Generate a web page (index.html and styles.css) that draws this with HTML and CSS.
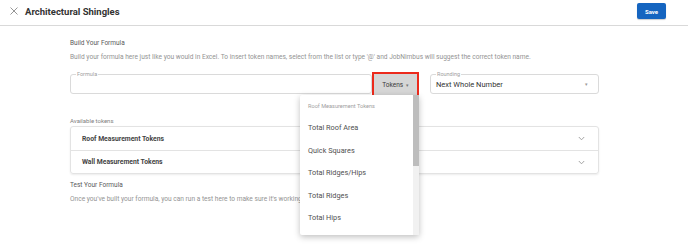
FILE: index.html
```html
<!DOCTYPE html>
<html lang="en">
<head>
<meta charset="UTF-8">
<meta name="viewport" content="width=device-width, initial-scale=1.0">
<title>Architectural Shingles</title>
<link rel="stylesheet" href="styles.css">
</head>
<body>

<div class="topbar">
    <div class="title-wrap">
        <svg class="close-icon" width="8" height="8" viewBox="0 0 8 8"><path d="M0.5 0.5L7.5 7.5M7.5 0.5L0.5 7.5" stroke="#8a8a8a" stroke-width="0.9" fill="none"/></svg>
        <h1>Architectural Shingles</h1>
    </div>
    <button class="save-btn">Save</button>
</div>

<div class="content">
    <h2 class="section-title">Build Your Formula</h2>
    <p class="hint">Build your formula here just like you would in Excel. To insert token names, select from the list or type '@' and JobNimbus will suggest the correct token name.</p>

    <div class="formula-row">
        <div class="formula-group">
            <fieldset class="outlined formula-field">
                <legend>Formula</legend>
            </fieldset>
            <button class="tokens-btn">Tokens <span class="caret">&#9662;</span></button>

            <!-- open tokens menu -->
            <div class="token-menu">
                <div class="menu-list">
                    <div class="menu-header">Roof Measurement Tokens</div>
                    <div class="menu-item">Total Roof Area</div>
                    <div class="menu-item">Quick Squares</div>
                    <div class="menu-item">Total Ridges/Hips</div>
                    <div class="menu-item">Total Ridges</div>
                    <div class="menu-item">Total Hips</div>
                </div>
                <div class="menu-scroll"><div class="menu-thumb"></div></div>
            </div>
        </div>
        <fieldset class="outlined rounding-field">
            <legend>Rounding</legend>
            <span class="select-value">Next Whole Number</span>
            <span class="select-caret">&#9662;</span>
        </fieldset>
    </div>

    <div class="small-label">Available tokens</div>
    <div class="accordion">
        <div class="acc-row">
            <span>Roof Measurement Tokens</span>
            <svg width="7" height="5" viewBox="0 0 7 5"><path d="M0.8 1L3.5 3.8L6.2 1" stroke="#9a9a9a" stroke-width="0.9" fill="none"/></svg>
        </div>
        <div class="acc-row">
            <span>Wall Measurement Tokens</span>
            <svg width="7" height="5" viewBox="0 0 7 5"><path d="M0.8 1L3.5 3.8L6.2 1" stroke="#9a9a9a" stroke-width="0.9" fill="none"/></svg>
        </div>
    </div>

    <h2 class="section-title test-title">Test Your Formula</h2>
    <p class="hint">Once you've built your formula, you can run a test here to make sure it's working as expected.</p>
</div>

</body>
</html>
```

FILE: styles.css
```css
* {
    box-sizing: border-box;
    margin: 0;
    padding: 0;
}
body {
    font-family: Roboto, "Liberation Sans", sans-serif;
    background-color: #ffffff;
    color: #333333;
    min-height: 245px;
}

/* top bar */
.topbar {
    height: 26px;
    display: flex;
    justify-content: space-between;
    align-items: center;
    padding: 0 22px 0 10px;
    border-bottom: 1px solid #d9d9d9;
}
.title-wrap {
    display: flex;
    align-items: center;
    gap: 7px;
}
.close-icon {
    margin-top: -3px;
}
.title-wrap h1 {
    font-size: 9.5px;
    font-weight: 700;
    color: #333333;
    margin-top: -3px;
}
.save-btn {
    width: 29px;
    height: 16px;
    margin-top: -3px;
    background-color: #1565c0;
    color: #ffffff;
    border: none;
    border-radius: 2px;
    font-family: inherit;
    font-size: 6px;
    font-weight: 700;
    box-shadow: 0 1px 1px rgba(0,0,0,0.2);
}

/* main column */
.content {
    width: 529px;
    margin-left: 70px;
    padding-top: 12px;
}
.section-title {
    font-size: 6.5px;
    font-weight: 400;
    color: #5a5a5a;
    line-height: 10px;
}
.hint {
    font-size: 6.6px;
    color: #939393;
    line-height: 10px;
    margin-top: 4px;
    white-space: nowrap;
}

.formula-row {
    display: flex;
    gap: 11px;
    margin-top: 9px;
}
.formula-group {
    position: relative;
    display: flex;
    align-items: flex-start;
    width: 349px;
}
.outlined {
    height: 23px;
    border: 1px solid #dadada;
    border-radius: 3px;
    padding: 0 5px;
}
.outlined legend {
    font-size: 5.5px;
    line-height: 6px;
    color: #a0a0a0;
    padding: 0 1px;
}
.formula-field {
    flex: 1;
}
.tokens-btn {
    width: 47px;
    height: 25px;
    margin-top: 1px;
    background-color: #d6d6d6;
    border: 2px solid #ec2a1c;
    font-family: inherit;
    font-size: 6.5px;
    color: #3a3a3a;
}
.tokens-btn .caret {
    font-size: 5px;
    color: #777777;
    margin-left: 1px;
}

.token-menu {
    position: absolute;
    top: 24px;
    right: 0;
    width: 119px;
    height: 140px;
    display: flex;
    background-color: #ffffff;
    box-shadow: 0 2px 6px rgba(0,0,0,0.25);
    border-radius: 2px;
    z-index: 2;
}
.menu-list {
    flex: 1;
}
.menu-header {
    height: 22px;
    line-height: 22px;
    padding-left: 8px;
    font-size: 5.6px;
    color: #a0a0a0;
}
.menu-item {
    height: 22.5px;
    line-height: 22.5px;
    padding-left: 8px;
    font-size: 7.3px;
    color: #505050;
}
.menu-scroll {
    width: 6px;
    background-color: #f1f1f1;
}
.menu-thumb {
    height: 71px;
    background-color: #bdbdbd;
}

.rounding-field {
    flex: 1;
    display: flex;
    align-items: center;
    justify-content: space-between;
}
.select-value {
    font-size: 7.5px;
    color: #333333;
    margin-top: -2px;
}
.select-caret {
    font-size: 5px;
    color: #999999;
    margin: -2px 5px 0 0;
}

.small-label {
    font-size: 6px;
    color: #808080;
    line-height: 9px;
    margin-top: 19px;
    margin-bottom: 1px;
}
.accordion {
    border: 1px solid #e3e3e3;
    border-radius: 3px;
    box-shadow: 0 1px 2px rgba(0,0,0,0.08);
}
.acc-row {
    height: 23px;
    display: flex;
    align-items: center;
    justify-content: space-between;
    padding: 0 13px 0 11px;
    font-size: 6.8px;
    font-weight: 700;
    color: #444444;
}
.acc-row + .acc-row {
    border-top: 1px solid #e3e3e3;
}
.test-title {
    margin-top: 6px;
}
```
